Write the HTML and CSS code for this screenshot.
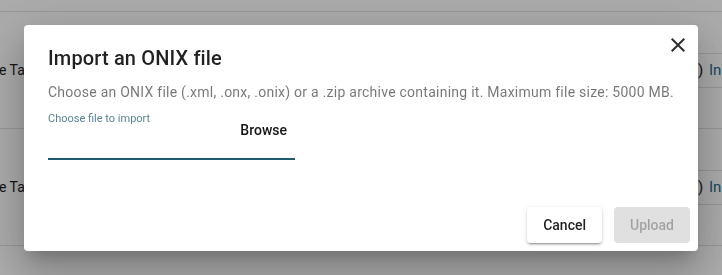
FILE: index.html
```html
<!DOCTYPE html>
<html lang="en">
<head>
<meta charset="utf-8">
<title>Import an ONIX file</title>
<link rel="stylesheet" href="styles.css">
</head>
<body>
<div class="page">
  <div class="row">
    <div class="cell-main">e Ta</div>
    <div class="cell-side"><div class="side-box"><span class="paren">)</span> <span class="link">In</span></div></div>
  </div>
  <div class="row">
    <div class="cell-main">e Ta</div>
    <div class="cell-side"><div class="side-box"><span class="paren">)</span> <span class="link">In</span></div></div>
  </div>
  <div class="row row-end"></div>
</div>
<div class="backdrop">
  <div class="dialog">
    <h2 class="title">Import an ONIX file</h2>
    <button class="close" aria-label="Close">
      <svg viewBox="0 0 24 24" width="24" height="24"><path d="M19 6.41L17.59 5 12 10.59 6.41 5 5 6.41 10.59 12 5 17.59 6.41 19 12 13.41 17.59 19 19 17.59 13.41 12z"/></svg>
    </button>
    <p class="desc">Choose an ONIX file (.xml, .onx, .onix) or a .zip archive containing it. Maximum file size: 5000 MB.</p>
    <div class="field">
      <span class="field-label">Choose file to import</span>
      <div class="field-row"><span class="browse">Browse</span></div>
    </div>
    <div class="actions">
      <button class="btn btn-raised">Cancel</button>
      <button class="btn btn-disabled" disabled>Upload</button>
    </div>
  </div>
</div>
</body>
</html>
```
FILE: styles.css
```css
html, body {
  margin: 0;
  padding: 0;
  background: #fff;
  font-family: Roboto, "Liberation Sans", Arial, sans-serif;
  overflow: hidden;
  width: 722px;
  height: 275px;
}
.page {
  padding-top: 11px;
}
.row {
  display: flex;
  align-items: center;
  height: 116px;
  border-top: 1px solid #e0e0e0;
  font-size: 14px;
  color: #212121;
  white-space: nowrap;
}
.row-end {
  height: 18px;
}
.cell-main {
  flex: 0 0 600px;
  margin-left: -1px;
}
.cell-side {
  flex: 1 1 auto;
}
.side-box {
  height: 33px;
  line-height: 33px;
  border-top: 1px solid #e0e0e0;
  border-bottom: 1px solid #e0e0e0;
  padding-left: 99px;
  font-size: 15px;
}
.paren { color: #212121; }
.link { color: #2a6b8c; margin-left: 2px; }

.backdrop {
  position: fixed;
  inset: 0;
  background: rgba(0, 0, 0, 0.33);
  display: flex;
  align-items: center;
  justify-content: center;
}
.dialog {
  position: relative;
  box-sizing: border-box;
  width: 674px;
  height: 226px;
  background: #fff;
  border-radius: 4px;
  padding: 17px 24px 0;
  display: flex;
  flex-direction: column;
  box-shadow: 0 11px 15px -7px rgba(0,0,0,.2), 0 24px 38px 3px rgba(0,0,0,.14), 0 9px 46px 8px rgba(0,0,0,.12);
}
.title {
  margin: 0;
  font-size: 20px;
  line-height: 32px;
  font-weight: 500;
  color: rgba(0,0,0,.87);
  letter-spacing: 0.15px;
}
.close {
  position: absolute;
  top: 0;
  right: 0;
  width: 40px;
  height: 40px;
  padding: 0;
  border: 0;
  background: transparent;
  display: flex;
  align-items: center;
  justify-content: center;
  cursor: pointer;
}
.close svg { fill: rgba(0,0,0,.82); }
.desc {
  margin: 8px 0 0;
  font-size: 14px;
  line-height: 20px;
  letter-spacing: 0.25px;
  color: rgba(0,0,0,.54);
}
.field {
  position: relative;
  width: 247px;
  margin-top: 9px;
  padding-top: 9px;
  padding-bottom: 18px;
  border-bottom: 2px solid #1f5a70;
}
.field-label {
  position: absolute;
  top: 1px;
  left: 0;
  font-size: 11px;
  line-height: 13px;
  color: #5b8597;
}
.field-row {
  display: flex;
  justify-content: flex-end;
  padding-right: 8px;
}
.browse {
  font-size: 14px;
  line-height: 20px;
  font-weight: 500;
  color: rgba(0,0,0,.92);
}
.actions {
  margin-top: auto;
  display: flex;
  justify-content: flex-end;
  gap: 12px;
  margin-right: -16px;
  padding-bottom: 8px;
}
.btn {
  height: 36px;
  padding: 0 16px;
  border: 0;
  border-radius: 4px;
  font-family: Roboto, "Liberation Sans", Arial, sans-serif;
  font-size: 14px;
  font-weight: 500;
  line-height: 36px;
}
.btn-raised {
  background: #fff;
  color: rgba(0,0,0,.87);
  box-shadow: 0 3px 1px -2px rgba(0,0,0,.2), 0 2px 2px 0 rgba(0,0,0,.14), 0 1px 5px 0 rgba(0,0,0,.12);
}
.btn-disabled {
  background: rgba(0,0,0,.12);
  color: rgba(0,0,0,.28);
}
```
